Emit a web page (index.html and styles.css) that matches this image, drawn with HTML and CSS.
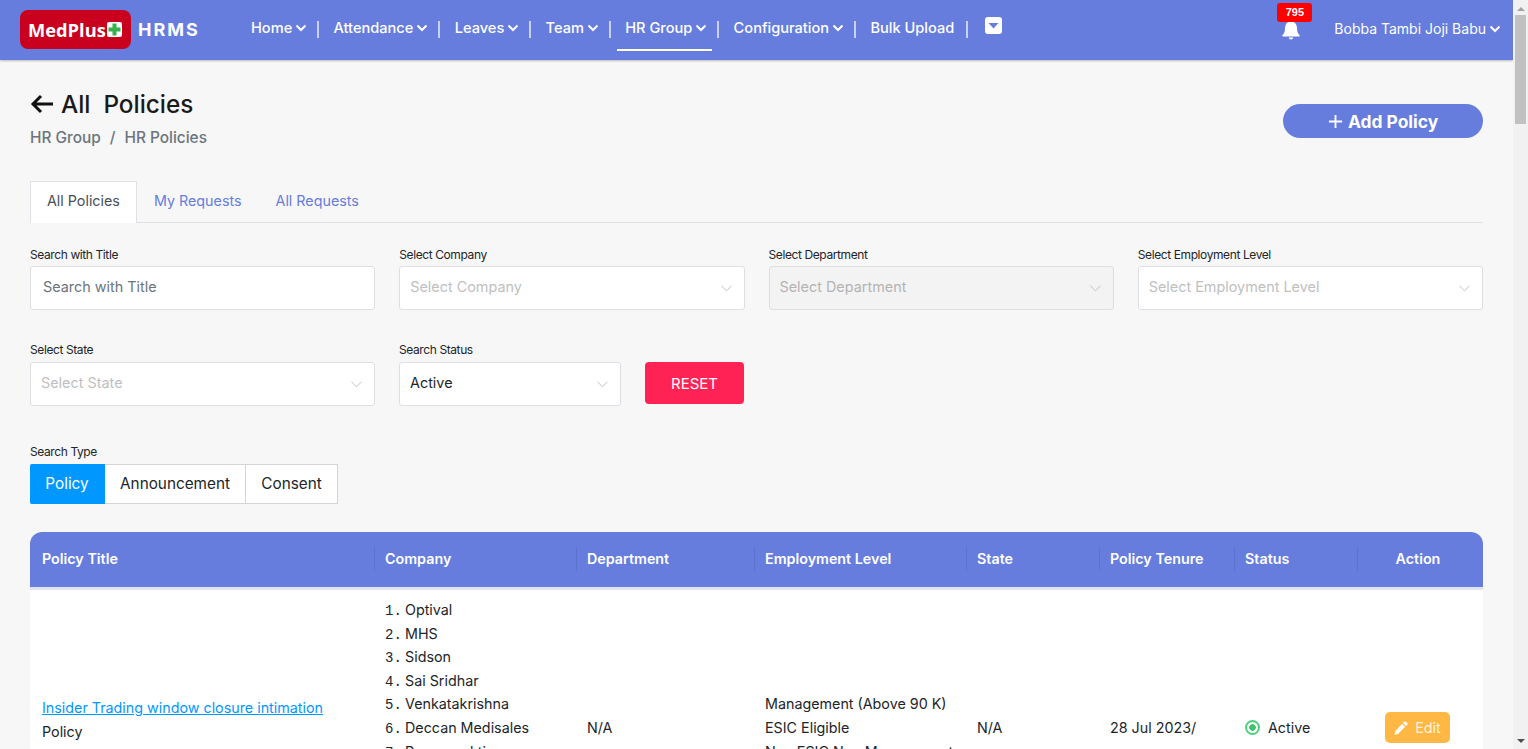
FILE: index.html
```html
<!DOCTYPE html>
<html lang="en">
  <head>
    <meta charset="utf-8" />
    <title>All Policies - MedPlus HRMS</title>
    <link rel="stylesheet" href="styles.css">
  </head>
  <body>
    <header class="topbar">
      <a class="logo" href="#">
        <span class="logo-badge">MedPlus<svg class="logo-cross" viewBox="0 0 15 15"><rect width="15" height="15" rx="2" fill="#fff"/><path d="M5.500 1.500h4v4h4v4h-4v4h-4v-4h-4v-4h4z" fill="#35b04c"/></svg></span>
        <span class="logo-text">HRMS</span>
      </a>
      <nav class="nav">
        <a class="nav-item" href="#">Home<svg class="caret" viewBox="0 0 12 8"><path d="M1.500 1.500 6 6l4.500-4.500"/></svg></a>
        <a class="nav-item" href="#">Attendance<svg class="caret" viewBox="0 0 12 8"><path d="M1.500 1.500 6 6l4.500-4.500"/></svg></a>
        <a class="nav-item" href="#">Leaves<svg class="caret" viewBox="0 0 12 8"><path d="M1.500 1.500 6 6l4.500-4.500"/></svg></a>
        <a class="nav-item" href="#">Team<svg class="caret" viewBox="0 0 12 8"><path d="M1.500 1.500 6 6l4.500-4.500"/></svg></a>
        <a class="nav-item active" href="#">HR Group<svg class="caret" viewBox="0 0 12 8"><path d="M1.500 1.500 6 6l4.500-4.500"/></svg></a>
        <a class="nav-item" href="#">Configuration<svg class="caret" viewBox="0 0 12 8"><path d="M1.500 1.500 6 6l4.500-4.500"/></svg></a>
        <a class="nav-item plain" href="#">Bulk Upload</a>
        <a class="nav-more" href="#"><svg viewBox="0 0 17 17"><rect width="17" height="17" rx="3" fill="#fff"/><path d="M3.500 6h10l-5 5.500z" fill="#667ddd"/></svg></a>
      </nav>
      <div class="top-right">
        <span class="bell">
          <svg viewBox="0 0 18 20"><path d="M9 0a1.500 1.500 0 0 1 1.500 1.700C13.500 2.400 15 5 15 8c0 4 1 5.500 2.600 7.200.4.500.1 1.300-.6 1.300H1c-.7 0-1-.8-.6-1.300C2 13.500 3 12 3 8c0-3 1.500-5.600 4.500-6.300A1.500 1.500 0 0 1 9 0zM6.800 17.500h4.400A2.200 2.200 0 0 1 9 19.600a2.200 2.200 0 0 1-2.200-2.100z" fill="#fff"/></svg>
          <span class="bell-count">795</span>
        </span>
        <a class="user" href="#">Bobba Tambi Joji Babu<svg class="caret" viewBox="0 0 12 8"><path d="M1.500 1.500 6 6l4.500-4.500"/></svg></a>
      </div>
    </header>

    <main class="content">
      <div class="page-head">
        <div>
          <h1 class="page-title">
            <svg class="back" viewBox="0 0 24 20"><path d="M23 10H3M11 2l-8 8 8 8"/></svg>
            <span>All&nbsp; Policies</span>
          </h1>
          <div class="crumbs">HR Group<span class="crumb-sep">/</span>HR Policies</div>
        </div>
        <a class="add-btn" href="#"><svg viewBox="0 0 16 16"><path d="M8 1v14M1 8h14"/></svg>Add Policy</a>
      </div>

      <div class="tabs">
        <a class="tab active" href="#">All Policies</a>
        <a class="tab" href="#">My Requests</a>
        <a class="tab" href="#">All Requests</a>
      </div>

      <div class="filters">
        <div class="field">
          <label>Search with Title</label>
          <input class="control" placeholder="Search with Title" />
        </div>
        <div class="field">
          <label>Select Company</label>
          <div class="control select placeholder">Select Company<svg class="select-arrow" viewBox="0 0 12 7"><path d="M.5.500 6 6l5.500-5.500"/></svg></div>
        </div>
        <div class="field">
          <label>Select Department</label>
          <div class="control select placeholder disabled">Select Department<svg class="select-arrow" viewBox="0 0 12 7"><path d="M.5.500 6 6l5.500-5.500"/></svg></div>
        </div>
        <div class="field">
          <label>Select Employment Level</label>
          <div class="control select placeholder">Select Employment Level<svg class="select-arrow" viewBox="0 0 12 7"><path d="M.5.500 6 6l5.500-5.500"/></svg></div>
        </div>
      </div>

      <div class="filters-second">
        <div class="field">
          <label>Select State</label>
          <div class="control select placeholder">Select State<svg class="select-arrow" viewBox="0 0 12 7"><path d="M.5.500 6 6l5.500-5.500"/></svg></div>
        </div>
        <div class="field status-field">
          <label>Search Status</label>
          <div class="control select">Active<svg class="select-arrow" viewBox="0 0 12 7"><path d="M.5.500 6 6l5.500-5.500"/></svg></div>
        </div>
        <button class="reset-btn">RESET</button>
      </div>

      <div class="type-group">
        <label>Search Type</label>
        <div class="segments">
          <a class="segment active" href="#">Policy</a>
          <a class="segment" href="#">Announcement</a>
          <a class="segment" href="#">Consent</a>
        </div>
      </div>

      <div class="table-card">
        <table class="policy-table">
          <thead>
            <tr>
              <th class="col-title"><span>Policy Title</span></th>
              <th class="col-company"><span>Company</span></th>
              <th class="col-dept"><span>Department</span></th>
              <th class="col-level"><span>Employment Level</span></th>
              <th class="col-state"><span>State</span></th>
              <th class="col-tenure"><span>Policy Tenure</span></th>
              <th class="col-status"><span>Status</span></th>
              <th class="col-action"><span>Action</span></th>
            </tr>
          </thead>
          <tbody>
            <tr>
              <td>
                <a class="policy-link" href="#">Insider Trading window closure intimation</a>
                <div class="policy-type">Policy</div>
              </td>
              <td>
                <ol class="company-list">
                  <li>Optival</li>
                  <li>MHS</li>
                  <li>Sidson</li>
                  <li>Sai Sridhar</li>
                  <li>Venkatakrishna</li>
                  <li>Deccan Medisales</li>
                  <li>Pavanasakti</li>
                  <li>Medplus</li>
                  <li>Sri Sai</li>
                  <li>Vijaya</li>
                  <li>Ananda</li>
                </ol>
              </td>
              <td>N/A</td>
              <td class="level-cell">
                <div>Management (Above 90 K)</div>
                <div>ESIC Eligible</div>
                <div>Non ESIC Non Management</div>
              </td>
              <td>N/A</td>
              <td>28 Jul 2023/</td>
              <td><span class="status"><i class="status-dot"></i>Active</span></td>
              <td class="action-cell">
                <a class="edit-btn" href="#"><svg viewBox="0 0 16 16"><path d="M11.600.9a1.400 1.400 0 0 1 2 0l1.500 1.500a1.400 1.400 0 0 1 0 2L13.700 5.800 10.200 2.300zM9.300 3.200l3.500 3.500-8.200 8.200L.6 15.700l.8-4z" fill="#fff"/></svg>Edit</a>
              </td>
            </tr>
          </tbody>
        </table>
      </div>
    </main>

    <div class="scrollbar">
      <span class="scroll-up"></span>
      <span class="scroll-thumb"></span>
      <span class="scroll-down"></span>
    </div>
  </body>
</html>
```

FILE: styles.css
```css
body {
  margin: 0;
  padding-right: 15px;
  background: #f7f7f7;
  color: #212529;
  font-family: "Inter", "Liberation Sans", sans-serif;
  font-size: 14.300px;
}
a {
  text-decoration: none;
  color: inherit;
}

/* drawn page scrollbar */
.scrollbar {
  position: fixed;
  top: 0;
  right: 0;
  display: flex;
  flex-direction: column;
  align-items: center;
  width: 15px;
  height: 100vh;
  background: #f1f1f1;
}
.scroll-up {
  margin-top: 7px;
  border: 4px solid transparent;
  border-top: 0;
  border-bottom-color: #a3a3a3;
}
.scroll-thumb {
  margin-top: 4px;
  width: 11px;
  height: 109px;
  background: #c1c1c1;
}
.scroll-down {
  margin-top: auto;
  margin-bottom: 6px;
  border: 4px solid transparent;
  border-bottom: 0;
  border-top-color: #505050;
}

/* top bar */
.topbar {
  display: flex;
  align-items: flex-start;
  height: 60px;
  background: #667ddd;
  color: #fff;
  box-shadow: 0 1px 2px rgba(0, 0, 0, 0.25);
}
.logo {
  display: flex;
  align-items: center;
  flex: none;
  margin: 10px 0 0 20px;
  width: 223px;
}
.logo-badge {
  display: flex;
  align-items: center;
  box-sizing: border-box;
  width: 111px;
  height: 39px;
  padding: 0 0 1px 8px;
  background: #c9001e;
  border-radius: 8px;
  font-family: "Open Sans", sans-serif;
  font-size: 18.300px;
  font-weight: 700;
}
.logo-cross {
  width: 15px;
  height: 15px;
  margin-left: 1px;
}
.logo-text {
  margin-left: 7px;
  font-size: 18px;
  font-weight: 700;
  letter-spacing: 2px;
}
.nav {
  display: flex;
  align-items: flex-start;
}
.nav-item {
  display: flex;
  align-items: center;
  position: relative;
  box-sizing: border-box;
  height: 50px;
  padding: 6px 5px 0 8px;
  margin-right: 13.300px;
  font-size: 14.600px;
  font-weight: 500;
}
.nav-item::after {
  content: "";
  position: absolute;
  right: -7px;
  top: 21px;
  width: 2px;
  height: 17px;
  background: rgba(255, 255, 255, 0.65);
}
.nav-item.active {
  height: 51px;
  border-bottom: 2px solid #fff;
}
.nav-item.plain {
  padding-right: 7px;
}
.caret {
  width: 12px;
  height: 8px;
  margin-left: 3px;
  fill: none;
  stroke: #fff;
  stroke-width: 2;
}
.nav-more {
  margin: 17px 0 0 10px;
}
.nav-more svg {
  display: block;
  width: 17px;
  height: 17px;
}
.top-right {
  display: flex;
  align-items: flex-start;
  margin-left: auto;
  margin-right: 12px;
}
.bell {
  display: block;
  position: relative;
  margin-top: 20px;
  margin-right: 34px;
}
.bell svg {
  display: block;
  width: 18px;
  height: 20px;
}
.bell-count {
  position: absolute;
  left: -5px;
  top: -17px;
  width: 35px;
  height: 19px;
  background: #f00;
  border-radius: 3px;
  text-align: center;
  font-family: "Liberation Sans", sans-serif;
  font-size: 11px;
  font-weight: 700;
  line-height: 19px;
}
.user {
  display: flex;
  align-items: center;
  height: 57px;
  font-size: 14px;
}

/* page */
.content {
  padding: 28px 30px 0 30px;
}
.page-head {
  display: flex;
  justify-content: space-between;
  align-items: flex-start;
  height: 93px;
}
.page-title {
  display: flex;
  align-items: center;
  margin: 0;
  height: 31px;
  color: #1a1a1a;
  font-size: 24.300px;
  font-weight: 500;
}
.back {
  width: 24px;
  height: 20px;
  margin-right: 7px;
  fill: none;
  stroke: #111;
  stroke-width: 3;
}
.crumbs {
  margin-top: 9px;
  color: #6c757d;
  font-size: 15.400px;
  font-weight: 500;
}
.crumb-sep {
  margin: 0 9px;
}
.add-btn {
  display: flex;
  align-items: center;
  justify-content: center;
  gap: 5px;
  margin-top: 16px;
  width: 200px;
  height: 34px;
  background: #667ddd;
  color: #fff;
  border-radius: 17px;
  font-size: 17.400px;
  font-weight: 700;
}
.add-btn svg {
  width: 15px;
  height: 15px;
  fill: none;
  stroke: #fff;
  stroke-width: 2;
}

/* tabs */
.tabs {
  display: flex;
  height: 41px;
  border-bottom: 1px solid #dee2e6;
}
.tab {
  display: flex;
  align-items: center;
  padding: 0 17px 2px;
  color: #667ddd;
  white-space: nowrap;
}
.tab.active {
  box-sizing: border-box;
  width: 107px;
  height: 42px;
  padding: 0 0 5px 16px;
  background: #fff;
  color: #495057;
  border: 1px solid #dee2e6;
  border-bottom: 0;
}

/* filters */
.filters {
  display: grid;
  grid-template-columns: repeat(4, 1fr);
  column-gap: 24px;
  margin-top: 25px;
}
.filters .field label {
  margin-bottom: 4px;
}
.filters-second {
  display: flex;
  align-items: flex-end;
  gap: 24px;
  margin-top: 33px;
}
.filters-second .field {
  width: 345px;
}
.filters-second .status-field {
  width: 222px;
}
.field label,
.type-group label {
  display: block;
  margin-bottom: 5px;
  color: #212529;
  font-size: 12px;
  line-height: 14px;
  letter-spacing: -0.400px;
}
.control {
  display: flex;
  align-items: center;
  box-sizing: border-box;
  width: 100%;
  height: 44px;
  padding: 0 12px 3px;
  background: #fff;
  border: 1px solid #dcdfe3;
  border-radius: 3px;
  font-family: inherit;
  font-size: 14.400px;
  outline: none;
  color: #212529;
}
.control::placeholder {
  color: #6c757d;
}
.select {
  position: relative;
  padding-left: 10px;
}
.placeholder {
  color: #c0c0c0;
}
.disabled {
  background: #f3f3f3;
  color: #b4b4b4;
}
.select-arrow {
  position: absolute;
  right: 12px;
  top: 18px;
  width: 11px;
  height: 7px;
  fill: none;
  stroke: #bbb;
  stroke-width: 1;
}
.reset-btn {
  width: 99px;
  height: 42px;
  margin-bottom: 2px;
  background: #ff2255;
  color: #fff;
  border: 0;
  border-radius: 4px;
  font-family: inherit;
  font-size: 15px;
}

/* policy / announcement / consent */
.type-group {
  margin-top: 39px;
}
.segments {
  display: flex;
}
.segment {
  display: flex;
  align-items: center;
  justify-content: center;
  box-sizing: border-box;
  height: 40px;
  width: 141px;
  padding-bottom: 1px;
  background: #fff;
  border: 1px solid #d4d4d4;
  border-left: 0;
  font-size: 15.300px;
  color: #212529;
}
.segment.active {
  width: 75px;
  background: #0098ff;
  border-color: #0098ff;
  color: #fff;
  border-radius: 2px 0 0 2px;
}
.segment:last-child {
  width: 92px;
}

/* table */
.table-card {
  margin-top: 28px;
  background: #fff;
  border-radius: 12px 12px 0 0;
}
.policy-table {
  width: 100%;
  table-layout: fixed;
  border-collapse: collapse;
}
.policy-table th {
  height: 53px;
  padding: 0 0 2px;
  background: #667ddd;
  border-bottom: 3px solid #e0e4ee;
  color: #fff;
  text-align: left;
  font-size: 14.300px;
  font-weight: 600;
}
.policy-table th:first-child {
  border-top-left-radius: 12px;
}
.policy-table th:last-child {
  border-top-right-radius: 12px;
}
.policy-table th span {
  display: flex;
  align-items: center;
  height: 24px;
  padding-left: 10px;
  border-left: 1px solid #5c72cf;
}
.policy-table th:first-child span {
  border-left: 0;
  padding-left: 12px;
}
.policy-table th.col-action span {
  justify-content: center;
  padding: 0 5px 0 0;
}
.col-title { width: 344px; }
.col-company { width: 202px; }
.col-dept { width: 178px; }
.col-level { width: 212px; }
.col-state { width: 133px; }
.col-tenure { width: 135px; }
.col-status { width: 123px; }
.policy-table td {
  padding: 8px 11px;
  vertical-align: middle;
  font-size: 14.300px;
  line-height: 23.600px;
  color: #212529;
}
.policy-table td:first-child {
  padding-left: 12px;
}
.policy-link {
  color: #0098ff;
  text-decoration: underline;
}
.policy-type {
  margin-bottom: 16px;
}
.level-cell {
  white-space: nowrap;
}
.company-list {
  margin: 0;
  padding: 0;
  list-style: none;
  counter-reset: company;
}
.company-list li {
  display: flex;
  align-items: baseline;
  counter-increment: company;
}
.company-list li::before {
  content: counter(company) ".";
  width: 20px;
  font-family: "Liberation Mono", monospace;
  font-size: 14px;
  line-height: 14px;
}
.status {
  display: flex;
  align-items: center;
  gap: 8px;
}
.status-dot {
  display: flex;
  box-sizing: border-box;
  width: 15px;
  height: 15px;
  border: 2px solid #4cd07d;
  border-radius: 50%;
  background: radial-gradient(circle, #3cc667 0 3px, #fff 3.500px);
}
.policy-table .action-cell {
  padding: 0 5px 0 0;
  text-align: center;
}
.edit-btn {
  display: inline-flex;
  align-items: center;
  justify-content: center;
  gap: 7px;
  width: 65px;
  height: 31px;
  vertical-align: middle;
  background: #ffb844;
  color: rgba(255, 255, 255, 0.85);
  border-radius: 5px;
  font-size: 14.300px;
}
.edit-btn svg {
  width: 14px;
  height: 14px;
}
```
